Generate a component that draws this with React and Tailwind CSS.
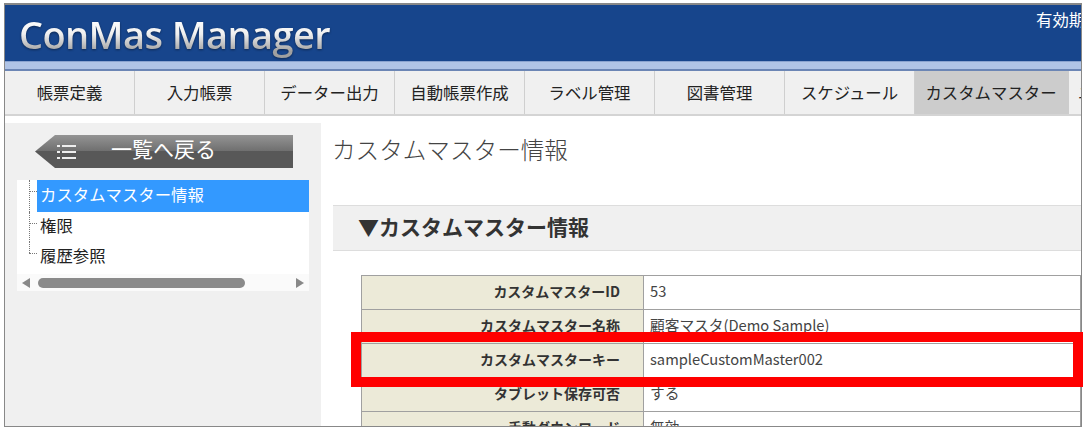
const tabs = ['帳票定義', '入力帳票', 'データー出力', '自動帳票作成', 'ラベル管理', '図書管理', 'スケジュール'];

const rows = [
  ['カスタムマスターID', '53'],
  ['カスタムマスター名称', '顧客マスタ(Demo Sample)'],
  ['カスタムマスターキー', 'sampleCustomMaster002'],
  ['タブレット保存可否', 'する'],
  ['手動ダウンロード', '無効'],
];

const font = { fontFamily: '"Noto Sans CJK JP", "Noto Sans", sans-serif' };

function TreeItem({ label, selected, last }) {
  return (
    <div className={`relative flex items-center pl-[20px] ${selected ? 'h-[32px]' : 'h-[30px]'}`}>
      <span className={`absolute left-[12px] top-0 w-[8px] border-l border-dotted border-[#777] ${last ? 'h-[11px]' : 'h-full'}`} />
      <span className="absolute left-[12px] top-[11px] w-[8px] border-t border-dotted border-[#777]" />
      <span className={`flex-1 h-full flex items-center pl-[3px] pb-[4px] text-[16.4px] ${selected ? 'bg-[#3399ff] text-white' : 'text-[#222]'}`}>
        {label}
      </span>
    </div>
  );
}

export default function App() {
  return (
    <div className="relative w-[1084px] h-[431px] bg-white overflow-hidden" style={font}>
      <div className="absolute left-[4px] top-[3px] w-[1078px] h-[424px] border border-[#888] border-t-2 overflow-hidden bg-white flex flex-col">
        <header className="h-[56px] bg-[#17458c] flex shrink-0 justify-between relative">
          <span
            className="ml-[14px] mt-[4px] h-[50px] text-[38px] leading-[50px] font-semibold tracking-[-0.6px] bg-[linear-gradient(#ffffff_20%,#f0f0f0_50%,#a0a0a0_85%)] bg-clip-text text-transparent drop-shadow-[0_1px_1px_rgba(0,0,0,0.4)]"
            style={{ fontFamily: '"Open Sans", sans-serif' }}
          >
            ConMas Manager
          </span>
          <span className="absolute left-[1031px] top-[2px] text-[16.4px] leading-[24px] text-white whitespace-nowrap">有効期限</span>
        </header>
        <div className="h-[10px] shrink-0 bg-[#b0c4e6] border-t border-[#8aa3cf] border-b-2 border-b-[#6c86b5]" />
        <nav className="h-[45px] shrink-0 flex bg-[#f0f0f0] border-b-2 border-[#d4d4d4] overflow-hidden">
          {tabs.map((t) => (
            <div key={t} className="w-[130px] shrink-0 flex items-center justify-center border-r border-[#cfcfcf] text-[16.4px] text-[#222]">
              {t}
            </div>
          ))}
          <div className="w-[154px] shrink-0 flex items-center justify-center pr-[2px] bg-[#cccccc] text-[16.4px] text-[#222]">カスタムマスター</div>
          <div className="pl-[9px] shrink-0 flex items-center text-[16.4px] text-[#222] whitespace-nowrap">ユーザー</div>
        </nav>
        <div className="flex flex-1 min-h-0 pt-[7px]">
          <aside className="w-[316px] shrink-0 bg-[#f0f0f0] pt-[12px] pl-[12px] pr-[12px]">
            <button className="ml-[18px] w-[258px] h-[33px] flex items-center bg-[linear-gradient(#949494,#6e6e6e_50%,#585858_50%,#585858)] [clip-path:polygon(0_50%,20px_0,100%_0,100%_100%,20px_100%)] text-white text-[21px]">
              <svg width="20" height="16" viewBox="0 0 20 16" className="ml-[22px] shrink-0" fill="#eeeeee">
                <rect x="0" y="1" width="3" height="2" />
                <rect x="5" y="1" width="14" height="2" />
                <rect x="0" y="7" width="3" height="2" />
                <rect x="5" y="7" width="14" height="2" />
                <rect x="0" y="13" width="3" height="2" />
                <rect x="5" y="13" width="14" height="2" />
              </svg>
              <span className="ml-[34px] leading-none pb-[6px]">一覧へ戻る</span>
            </button>
            <div className="mt-[12px] w-[292px] h-[111px] bg-white">
              <TreeItem label="カスタムマスター情報" selected />
              <TreeItem label="権限" />
              <TreeItem label="履歴参照" last />
              <div className="mt-[2px] h-[17px] bg-[#fafafa] flex items-center">
                <span className="ml-[5px] w-0 h-0 border-y-[5px] border-y-transparent border-r-[8px] border-r-[#888]" />
                <span className="ml-[8px] w-[207px] h-[10px] rounded-full bg-[#8a8a8a]" />
                <span className="ml-auto mr-[5px] w-0 h-0 border-y-[5px] border-y-transparent border-l-[8px] border-l-[#888]" />
              </div>
            </div>
          </aside>
          <main className="flex-1 min-w-0 pl-[11px]">
            <h1 className="mt-[8px] text-[23.6px] leading-[36px] font-light text-[#444]">カスタムマスター情報</h1>
            <h2 className="mt-[38px] h-[46px] flex items-center pl-[25px] pb-[3px] ml-[1px] bg-[#f0f0f0] border-y border-[#dddddd] text-[21px] font-bold text-[#333]">
              ▼カスタムマスター情報
            </h2>
            <table className="mt-[24px] ml-[29px] w-[720px] border-collapse table-fixed text-[14px]">
              <tbody>
                {rows.map(([k, v]) => (
                  <tr key={k} className="h-[34px]">
                    <th className="w-[282px] bg-[#ecead8] border border-[#a0a0a0] pr-[23px] pb-[2px] text-right font-bold text-[#333]">{k}</th>
                    <td className="border border-[#a0a0a0] pl-[6px] pb-[2px] text-[14.7px] text-[#444]">{v}</td>
                  </tr>
                ))}
              </tbody>
            </table>
          </main>
        </div>
      </div>
      <div className="absolute left-[351px] top-[332px] w-[732px] h-[55px] border-[10px] border-[#ff0000]" />
    </div>
  );
}
